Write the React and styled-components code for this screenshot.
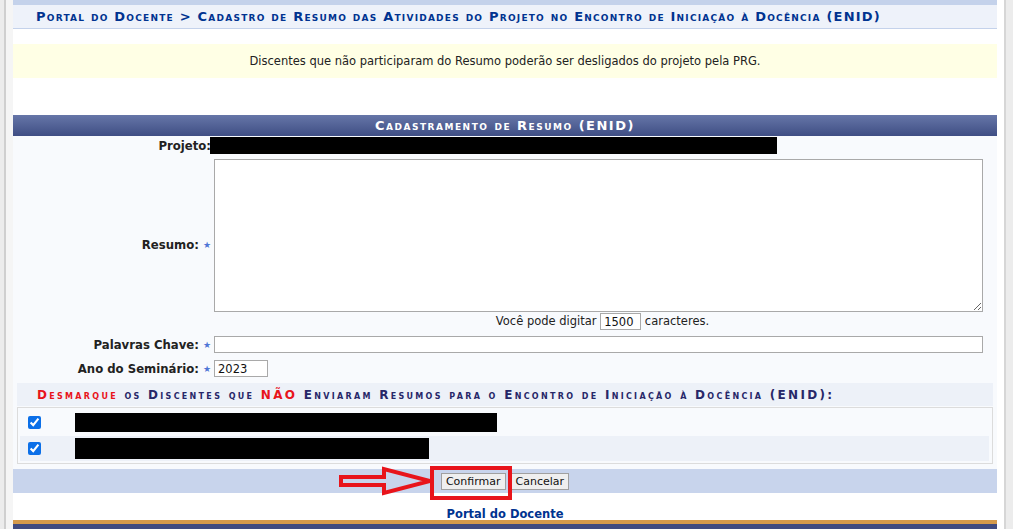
import React from "react";
import styled, { createGlobalStyle } from "styled-components";

const GlobalStyle = createGlobalStyle`
  html, body {
    margin: 0;
    padding: 0;
    background: #fff;
  }
  body {
    font-family: "DejaVu Sans", Verdana, sans-serif;
    font-size: 11px;
    color: #222;
  }
`;

const Frame = styled.div`
  display: flex;
  height: 529px;
  overflow: hidden;
`;

const LeftGutter = styled.div`
  width: 13px;
  flex-shrink: 0;
  background: linear-gradient(to right, #ececec 0 4px, #cfcfcf 4px 6px, #f5f5f5 6px 13px);
`;

const RightGutter = styled.div`
  width: 16px;
  flex-shrink: 0;
  background: linear-gradient(to right, #fff 0 7px, #d6d6d6 7px 9px, #ececec 9px 16px);
`;

const Main = styled.div`
  width: 984px;
  flex-shrink: 0;
  display: flex;
  flex-direction: column;

  & > * {
    flex-shrink: 0;
  }
`;

const TopBar = styled.div`
  height: 5px;
  background: #c4d2eb;
`;

const Breadcrumb = styled.h2`
  margin: 0;
  height: 23px;
  line-height: 24px;
  padding-left: 23px;
  background: #eef2fa;
  border-bottom: 1px solid #c4d2eb;
  font-size: 13px;
  font-weight: bold;
  font-variant: small-caps;
  letter-spacing: 1.23px;
  color: #003390;
  white-space: nowrap;
`;

const Message = styled.div`
  margin-top: 15px;
  height: 34px;
  display: flex;
  align-items: center;
  justify-content: center;
  background: #ffffe5;
  font-size: 11.5px;
  color: #222;
`;

const FormTable = styled.div`
  margin-top: 37px;
  display: flex;
  flex-direction: column;
`;

const Caption = styled.div`
  height: 21px;
  line-height: 22px;
  text-align: center;
  background: linear-gradient(#6676a8, #3f4e84);
  color: #fff;
  font-size: 13px;
  font-weight: bold;
  font-variant: small-caps;
  letter-spacing: 1.5px;
`;

const FormBody = styled.div`
  background: #f8fafd;
  padding: 1px 4px 5px;
  display: flex;
  flex-direction: column;
`;

const FieldRow = styled.div`
  display: grid;
  grid-template-columns: 194px 1fr;
  column-gap: 3px;
  align-items: center;
  margin-top: ${(p) => p.$top || 0}px;
`;

const Label = styled.div`
  text-align: right;
  font-weight: bold;
  font-size: 11.7px;
  color: #222;
  white-space: nowrap;
  padding-top: ${(p) => p.$drop || 0}px;
`;

const Star = styled.span`
  color: #4f75d6;
  font-size: 9px;
  margin-left: 4px;
  vertical-align: 1px;
`;

const Redacted = styled.div`
  background: #000;
  width: ${(p) => p.$w}px;
  height: ${(p) => p.$h}px;
  margin-left: ${(p) => p.$ml || 0}px;
`;

const TextArea = styled.textarea`
  width: 769px;
  height: 153px;
  box-sizing: border-box;
  border: 1px solid #a9a9a9;
  background: #fff;
  margin: 0;
  display: block;
  font-family: "DejaVu Sans", Verdana, sans-serif;
`;

const TextInput = styled.input`
  width: ${(p) => p.$w}px;
  height: 17px;
  box-sizing: border-box;
  border: 1px solid #a9a9a9;
  background: #fff;
  margin: 0;
  padding: 0 3px;
  font-family: "DejaVu Sans", Verdana, sans-serif;
  font-size: 11.5px;
  color: #111;
  vertical-align: middle;
`;

const Counter = styled.div`
  width: 769px;
  height: 17px;
  line-height: 17px;
  padding-left: 8px;
  box-sizing: border-box;
  text-align: center;
  font-size: 11.5px;
  color: #222;
`;

const SubHeader = styled.div`
  margin-top: 6px;
  height: 23px;
  line-height: 24px;
  padding-left: 20px;
  background: #edf1f8;
  font-size: 12px;
  font-weight: bold;
  font-variant: small-caps;
  letter-spacing: 2.3px;
  color: #272768;
  white-space: nowrap;
`;

const Warn = styled.span`
  color: #e8141b;
`;

const ListBox = styled.div`
  margin-top: 1px;
  border: 1px solid #dcdcdc;
  padding: 1px 3px 2px 2px;
  display: flex;
  flex-direction: column;
`;

const ListRow = styled.div`
  height: ${(p) => p.$h}px;
  display: flex;
  align-items: center;
  background: ${(p) => (p.$alt ? "#edf1f8" : "transparent")};
`;

const Check = styled.input`
  margin: 0 34px 0 8px;
  width: 13px;
  height: 13px;
  accent-color: #0b6fe8;
`;

const ButtonBar = styled.div`
  position: relative;
  height: 24px;
  background: #c8d4ec;
  display: flex;
  align-items: center;
  justify-content: center;
  gap: 5px;
`;

const Button = styled.button`
  height: 17px;
  padding: 0 4px;
  border: 1px solid #a0a0a0;
  background: #efefef;
  font-family: "DejaVu Sans", Verdana, sans-serif;
  font-size: 11px;
  color: #111;
  margin: 0;
  line-height: 15px;
`;

const Highlight = styled.div`
  position: absolute;
  left: 417px;
  top: -3px;
  width: 82px;
  height: 34px;
  box-sizing: border-box;
  border: 4px solid #e8141b;
  pointer-events: none;
`;

const Arrow = styled.svg`
  position: absolute;
  left: 324px;
  top: -4px;
  pointer-events: none;
`;

const FooterLink = styled.a`
  display: block;
  margin-top: 15px;
  text-align: center;
  font-size: 11.5px;
  font-weight: bold;
  color: #003390;
  text-decoration: none;
  line-height: 12px;
`;

const OrangeRule = styled.div`
  height: 4px;
  background: #d59a4b;
`;

const BlueRule = styled.div`
  height: 10px;
  background: #404b80;
`;

export default function App() {
  return (
    <>
      <GlobalStyle />
      <Frame>
        <LeftGutter />
        <Main>
          <TopBar />
          <Breadcrumb>
            Portal do Docente &gt; Cadastro de Resumo das Atividades do Projeto no Encontro de Iniciação à Docência (ENID)
          </Breadcrumb>
          <Message>
            Discentes que não participaram do Resumo poderão ser desligados do projeto pela PRG.
          </Message>

          <FormTable>
            <Caption>Cadastramento de Resumo (ENID)</Caption>
            <FormBody>
              <FieldRow>
                <Label>Projeto:</Label>
                <Redacted $w={567} $h={17} $ml={-4} />
              </FieldRow>

              <FieldRow $top={5}>
                <Label $drop={18}>
                  Resumo:<Star>★</Star>
                </Label>
                <TextArea />
              </FieldRow>

              <FieldRow $top={1}>
                <div />
                <Counter>
                  Você pode digitar <TextInput $w={41} defaultValue="1500" readOnly /> caracteres.
                </Counter>
              </FieldRow>

              <FieldRow $top={6}>
                <Label>
                  Palavras Chave:<Star>★</Star>
                </Label>
                <TextInput $w={769} />
              </FieldRow>

              <FieldRow $top={7}>
                <Label>
                  Ano do Seminário:<Star>★</Star>
                </Label>
                <TextInput $w={54} defaultValue="2023" />
              </FieldRow>

              <SubHeader>
                <Warn>Desmarque</Warn> os Discentes que <Warn>NÃO</Warn> Enviaram Resumos para o Encontro de Iniciação à Docência (ENID):
              </SubHeader>

              <ListBox>
                <ListRow $h={27}>
                  <Check type="checkbox" defaultChecked />
                  <Redacted $w={422} $h={19} />
                </ListRow>
                <ListRow $h={25} $alt>
                  <Check type="checkbox" defaultChecked />
                  <Redacted $w={354} $h={21} />
                </ListRow>
              </ListBox>
            </FormBody>

            <ButtonBar>
              <Arrow width="97" height="33" viewBox="0 0 97 33">
                <polygon
                  points="4,12 47,12 47,4 93,16 47,28 47,20 4,20"
                  fill="none"
                  stroke="#e8141b"
                  strokeWidth="4"
                  strokeLinejoin="miter"
                />
              </Arrow>
              <Button>Confirmar</Button>
              <Button>Cancelar</Button>
              <Highlight />
            </ButtonBar>
          </FormTable>

          <FooterLink href="#">Portal do Docente</FooterLink>
          <OrangeRule />
          <BlueRule />
        </Main>
        <RightGutter />
      </Frame>
    </>
  );
}
